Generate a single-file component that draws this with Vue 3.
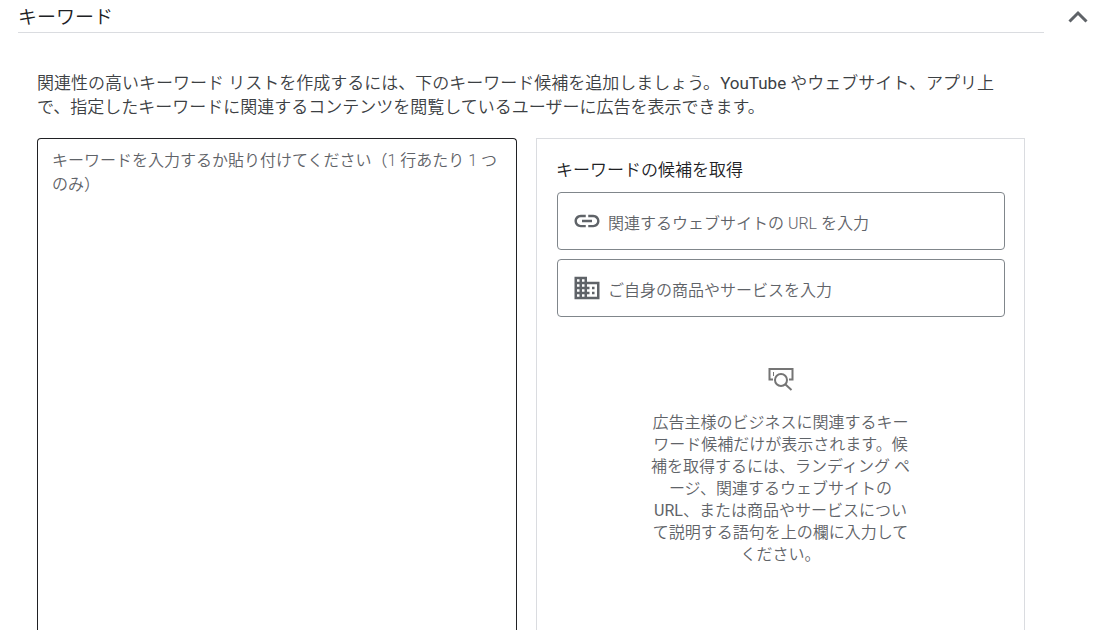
<script setup>
import { ref } from 'vue'

const open = ref(true)
const keywords = ref('')
const website = ref('')
const product = ref('')
</script>

<template>
  <main class="page">
    <header class="section-head">
      <h1 class="title">キーワード</h1>
      <button
        class="toggle"
        type="button"
        aria-label="キーワード"
        :aria-expanded="open"
        @click="open = !open"
      >
        <svg viewBox="0 0 28 28" width="28" height="28">
          <path d="M5.5 18.5 14 10l8.5 8.5" fill="none" stroke="#5f6368" stroke-width="3" />
        </svg>
      </button>
    </header>

    <section v-if="open" class="content">
      <p class="intro">
        関連性の高いキーワード リストを作成するには、下のキーワード候補を追加しましょう。<span class="latin">YouTube</span> やウェブサイト、アプリ上で、指定したキーワードに関連するコンテンツを閲覧しているユーザーに広告を表示できます。
      </p>

      <div class="columns">
        <textarea
          v-model="keywords"
          class="keywords"
          aria-label="キーワード"
          placeholder="キーワードを入力するか貼り付けてください（1 行あたり 1 つのみ）"
        ></textarea>

        <div class="panel">
          <h2 class="panel-title">キーワードの候補を取得</h2>

          <label class="field">
            <svg viewBox="0 0 24 24" width="30" height="30">
              <path
                d="M3.9 12c0-1.71 1.39-3.1 3.1-3.1h4V7H7c-2.76 0-5 2.24-5 5s2.24 5 5 5h4v-1.9H7c-1.71 0-3.1-1.39-3.1-3.1zM8 13h8v-2H8v2zm9-6h-4v1.9h4c1.71 0 3.1 1.39 3.1 3.1s-1.39 3.1-3.1 3.1h-4V17h4c2.76 0 5-2.24 5-5s-2.24-5-5-5z"
              />
            </svg>
            <input
              v-model="website"
              type="text"
              aria-label="関連するウェブサイトの URL を入力"
              placeholder="関連するウェブサイトの URL を入力"
            />
          </label>

          <label class="field">
            <svg viewBox="0 0 24 24" width="30" height="30">
              <path
                d="M12 7V3H2v18h20V7H12zM6 19H4v-2h2v2zm0-4H4v-2h2v2zm0-4H4V9h2v2zm0-4H4V5h2v2zm4 12H8v-2h2v2zm0-4H8v-2h2v2zm0-4H8V9h2v2zm0-4H8V5h2v2zm10 12h-8v-2h2v-2h-2v-2h2v-2h-2V9h8v10zm-2-8h-2v2h2v-2zm0 4h-2v2h2v-2z"
              />
            </svg>
            <input
              v-model="product"
              type="text"
              aria-label="ご自身の商品やサービスを入力"
              placeholder="ご自身の商品やサービスを入力"
            />
          </label>

          <div class="empty">
            <svg viewBox="0 0 26 24" width="26" height="24" fill="none" stroke="#757575">
              <path d="M5 12.5H1.5V2h23v10.5H21" stroke-width="2" />
              <path d="M5.5 5v4" stroke-width="1" />
              <circle cx="13" cy="13" r="6" stroke-width="2" />
              <path d="M17.5 17.5l6 5.5" stroke-width="2" />
            </svg>
            <p>
              広告主様のビジネスに関連するキーワード候補だけが表示されます。候補を取得するには、ランディング ページ、関連するウェブサイトの <span class="latin">URL</span>、または商品やサービスについて説明する語句を上の欄に入力してください。
            </p>
          </div>
        </div>
      </div>
    </section>
  </main>
</template>

<style>
body {
  margin: 0;
  background: #fff;
}
</style>

<style scoped>
.page {
  display: flex;
  flex-direction: column;
  box-sizing: border-box;
  min-height: 100vh;
  padding: 0 16px 0 18px;
  font-family: Roboto, "Noto Sans CJK JP", sans-serif;
  font-weight: 350;
  color: #3c4043;
}
.latin {
  font-weight: 400;
}
.section-head {
  display: flex;
  gap: 20px;
}
.title {
  flex: 1;
  margin: 0;
  padding-top: 4px;
  border-bottom: 1px solid #dadce0;
  font-size: 19px;
  font-weight: 350;
  line-height: 28px;
  color: #202124;
}
.toggle {
  display: flex;
  align-items: center;
  width: 28px;
  padding: 0;
  border: 0;
  background: none;
  cursor: pointer;
}
.content {
  flex: 1;
  display: flex;
  flex-direction: column;
  margin: 38px 67px 0 19px;
}
.intro {
  margin: 0 16px 19px 0;
  font-size: 17px;
  line-height: 24px;
}
.columns {
  flex: 1;
  display: grid;
  grid-template-columns: 480fr 489fr;
  gap: 19px;
}
.keywords {
  box-sizing: border-box;
  width: 100%;
  padding: 10px 14px;
  border: 1px solid #202124;
  border-bottom: 0;
  border-radius: 4px 4px 0 0;
  outline: none;
  resize: none;
  background: none;
  font: inherit;
  font-size: 16px;
  line-height: 24px;
  color: #202124;
}
.keywords::placeholder,
.field input::placeholder {
  color: #5f6368;
  opacity: 1;
}
.panel {
  padding: 19px 19px 0;
  border: 1px solid #dadce0;
  border-bottom: 0;
}
.panel-title {
  margin: 0 0 10px;
  font-size: 17px;
  font-weight: 350;
  line-height: 24px;
  color: #202124;
}
.field {
  display: flex;
  align-items: center;
  gap: 6px;
  box-sizing: border-box;
  height: 58px;
  margin: 0 0 9px 1px;
  padding: 0 14px;
  border: 1px solid #80868b;
  border-radius: 4px;
}
.field svg {
  flex: none;
  fill: #5f6368;
}
.field input {
  flex: 1;
  min-width: 0;
  padding: 6px 0 0;
  border: 0;
  outline: none;
  background: none;
  font: inherit;
  font-size: 16px;
  line-height: 24px;
  color: #202124;
}
.empty {
  display: flex;
  flex-direction: column;
  align-items: center;
  gap: 21px;
  padding-top: 41px;
}
.empty p {
  max-width: 262px;
  margin: 0;
  font-size: 16px;
  line-height: 22px;
  text-align: center;
  color: #5f6368;
}
</style>
